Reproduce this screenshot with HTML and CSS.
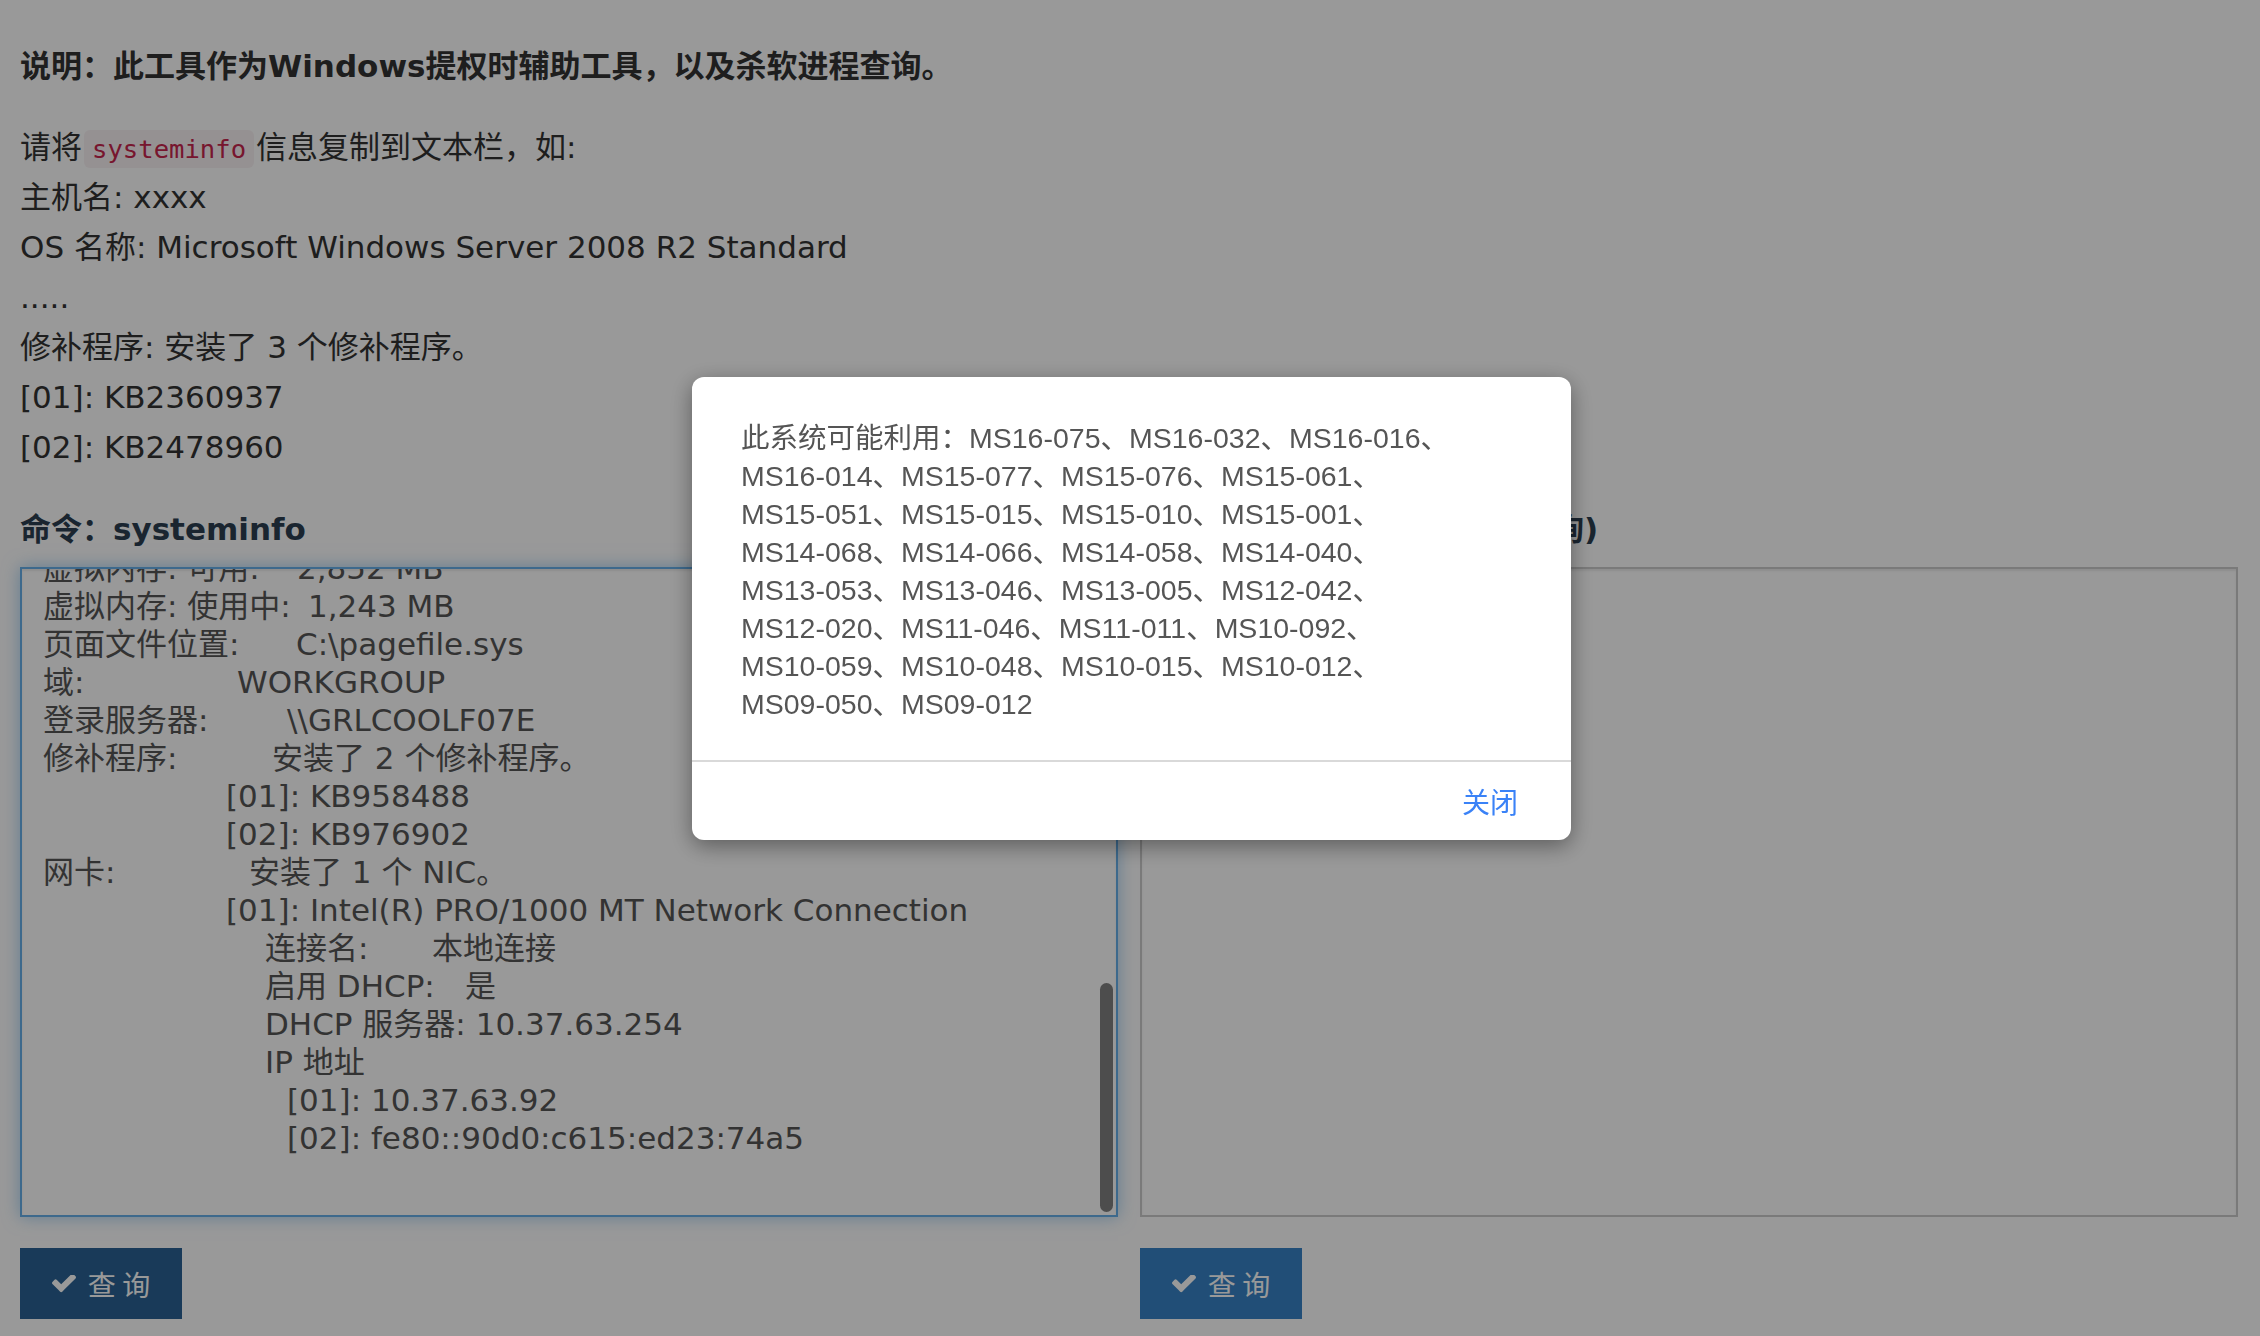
FILE: index.html
```html
<!DOCTYPE html>
<html lang="zh-CN">
<head>
<meta charset="utf-8">
<title>Windows提权辅助工具</title>
<link rel="stylesheet" href="styles.css">
</head>
<body>
<main class="page">
  <p class="title">说明：此工具作为Windows提权时辅助工具，以及杀软进程查询。</p>
  <div class="example">
    <div>请将<code>systeminfo</code>信息复制到文本栏，如:</div>
    <div>主机名: xxxx</div>
    <div>OS 名称: Microsoft Windows Server 2008 R2 Standard</div>
    <div>.....</div>
    <div>修补程序: 安装了 3 个修补程序。</div>
    <div>[01]: KB2360937</div>
    <div>[02]: KB2478960</div>
  </div>
  <div class="cols">
    <section class="col">
      <h4 class="label">命令：systeminfo</h4>
      <div class="textbox focused">
        <div class="lines">
          <div><span class="k w254">虚拟内存: 可用:</span>2,852 MB</div>
          <div><span class="k w265">虚拟内存: 使用中:</span>1,243 MB</div>
          <div><span class="k w253">页面文件位置:</span>C:\pagefile.sys</div>
          <div><span class="k w194">域:</span>WORKGROUP</div>
          <div><span class="k w244">登录服务器:</span>\\GRLCOOLF07E</div>
          <div><span class="k w229">修补程序:</span>安装了 2 个修补程序。</div>
          <div><span class="k w183"></span>[01]: KB958488</div>
          <div><span class="k w183"></span>[02]: KB976902</div>
          <div><span class="k w206">网卡:</span>安装了 1 个 NIC。</div>
          <div><span class="k w183"></span>[01]: Intel(R) PRO/1000 MT Network Connection</div>
          <div><span class="k w222"></span><span class="k w167">连接名:</span>本地连接</div>
          <div><span class="k w222"></span><span class="k w200">启用 DHCP:</span>是</div>
          <div><span class="k w222"></span>DHCP 服务器: 10.37.63.254</div>
          <div><span class="k w222"></span>IP 地址</div>
          <div><span class="k w244"></span>[01]: 10.37.63.92</div>
          <div><span class="k w244"></span>[02]: fe80::90d0:c615:ed23:74a5</div>
        </div>
        <div class="thumb"></div>
      </div>
      <button class="btn btn-focus" type="button">
        <svg class="ico" viewBox="121 430 1550 1130" width="24" height="18"><path fill="currentColor" d="M1671 566q0 40-28 68l-724 724-136 136q-28 28-68 28t-68-28l-136-136-362-362q-28-28-28-68t28-68l136-136q28-28 68-28t68 28l294 295 656-657q28-28 68-28t68 28l136 136q28 28 28 68z"/></svg>
        <span>查 询</span>
      </button>
    </section>
    <section class="col">
      <h4 class="label">命令：tasklist&nbsp; (杀软进程查询)</h4>
      <div class="textbox"></div>
      <button class="btn" type="button">
        <svg class="ico" viewBox="121 430 1550 1130" width="24" height="18"><path fill="currentColor" d="M1671 566q0 40-28 68l-724 724-136 136q-28 28-68 28t-68-28l-136-136-362-362q-28-28-28-68t28-68l136-136q28-28 68-28t68 28l294 295 656-657q28-28 68-28t68 28l136 136q28 28 28 68z"/></svg>
        <span>查 询</span>
      </button>
    </section>
  </div>
</main>
<div class="backdrop"></div>
<div class="dialog">
  <div class="dialog-body">此系统可能利用：MS16-075、MS16-032、MS16-016、<br>MS16-014、MS15-077、MS15-076、MS15-061、<br>MS15-051、MS15-015、MS15-010、MS15-001、<br>MS14-068、MS14-066、MS14-058、MS14-040、<br>MS13-053、MS13-046、MS13-005、MS12-042、<br>MS12-020、MS11-046、MS11-011、MS10-092、<br>MS10-059、MS10-048、MS10-015、MS10-012、<br>MS09-050、MS09-012</div>
  <div class="dialog-foot"><span class="close">关闭</span></div>
</div>
</body>
</html>
```

FILE: styles.css
```css
html, body {
  margin: 0;
  padding: 0;
  background: #fff;
}
body {
  width: 2260px;
  height: 1336px;
  overflow: hidden;
  font-family: "DejaVu Sans", "Noto Sans CJK SC", sans-serif;
  font-size: 31px;
  line-height: 50px;
  color: #333;
}
.page {
  padding: 41px 22px 0 20px;
}
.title {
  margin: 0 0 31px;
  font-weight: 700;
  line-height: 50px;
}
.example {
  margin-bottom: 32px;
}
.example > div {
  height: 50px;
}
.example code {
  font-family: "DejaVu Sans Mono", monospace;
  font-size: 25.6px;
  line-height: 1;
  color: #c7254e;
  background: #f9f2f4;
  padding: 4px 8px;
  border-radius: 6px;
  margin: 0 2px;
}
.cols {
  display: grid;
  grid-template-columns: 1fr 1fr;
  column-gap: 22px;
}
.col {
  display: flex;
  flex-direction: column;
  align-items: flex-start;
}
.label {
  margin: 0 0 13px;
  font-size: 31px;
  line-height: 50px;
  font-weight: 700;
  color: #2c3e50;
  white-space: nowrap;
}
.textbox {
  position: relative;
  box-sizing: border-box;
  width: 100%;
  height: 650px;
  border: 2px solid #ccc;
  background: #fff;
  padding: 0 0 0 21px;
  overflow: hidden;
  box-shadow: inset 0 2px 2px rgba(0,0,0,.075);
}
.textbox.focused {
  border-color: #66afe9;
  box-shadow: inset 0 2px 2px rgba(0,0,0,.075), 0 0 16px rgba(102,175,233,.6);
}
.lines {
  margin-top: -20px;
  font-family: "DejaVu Sans", "Noto Sans CJK SC", sans-serif;
  font-size: 31px;
  line-height: 38px;
  color: #555;
  white-space: nowrap;
}
.k { display: inline-block; }
.w167 { width: 167px; }
.w183 { width: 183px; }
.w194 { width: 194px; }
.w200 { width: 200px; }
.w206 { width: 206px; }
.w222 { width: 222px; }
.w229 { width: 229px; }
.w244 { width: 244px; }
.w253 { width: 253px; }
.w254 { width: 254px; }
.w265 { width: 265px; }
.thumb {
  position: absolute;
  right: 3px;
  top: 414px;
  width: 13px;
  height: 229px;
  border-radius: 7px;
  background: #808080;
}
.btn {
  margin-top: 31px;
  width: 162px;
  height: 71px;
  border: 0;
  border-radius: 0;
  padding: 0;
  display: flex;
  align-items: center;
  justify-content: center;
  gap: 12px;
  background: #3883c6;
  color: #fff;
  font-family: "Noto Sans CJK SC", sans-serif;
  font-size: 28px;
  line-height: 1;
}
.btn-focus {
  background: #2a6294;
}
.ico { display: block; }
.backdrop {
  position: fixed;
  inset: 0;
  background: rgba(0,0,0,.4);
}
.dialog {
  position: fixed;
  top: 377px;
  left: 692px;
  width: 879px;
  background: #fff;
  border-radius: 12px;
  box-shadow: 0 6px 22px rgba(0,0,0,.4);
  overflow: hidden;
}
.dialog-body {
  padding: 42px 40px 37px 49px;
  font-family: "Liberation Sans", "Noto Sans CJK SC", sans-serif;
  font-size: 28.5px;
  line-height: 38px;
  color: #555;
  white-space: nowrap;
}
.dialog-foot {
  border-top: 2px solid #d9d9d9;
  height: 78px;
  display: flex;
  align-items: center;
  justify-content: flex-end;
  padding-right: 53px;
}
.close {
  font-family: "Noto Sans CJK SC", sans-serif;
  font-size: 28px;
  color: #3a82f7;
}
```
